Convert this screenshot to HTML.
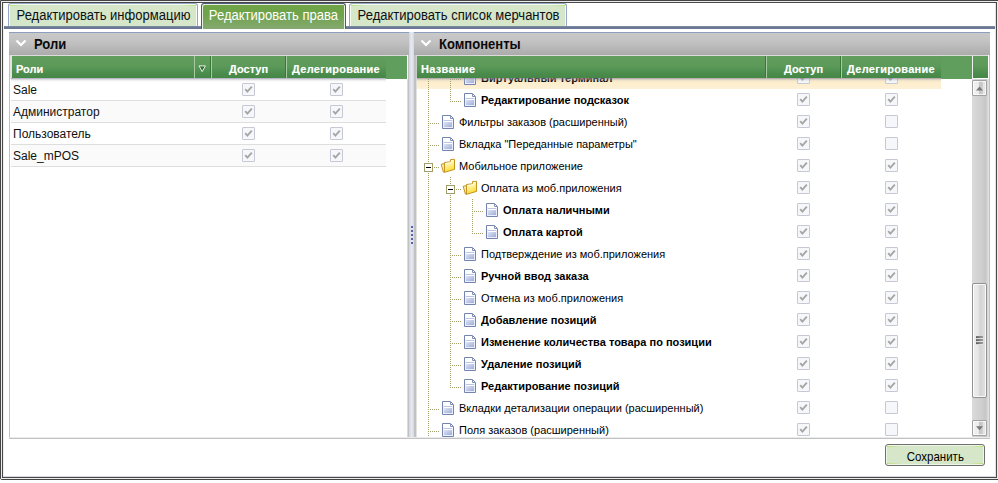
<!DOCTYPE html>
<html lang="ru">
<head>
<meta charset="utf-8">
<title>Редактировать права</title>
<style>
*{box-sizing:border-box;margin:0;padding:0}
html,body{width:998px;height:483px;overflow:hidden;background:#fff}
body{position:relative;font-family:"Liberation Sans",sans-serif;font-size:12px;color:#000}
div,svg{position:absolute}
/* outer frame */
#f1{left:0;top:0;width:999px;height:480px;border:1px solid #444;border-radius:0 0 0 2px}
#f2{left:1px;top:1px;width:997px;height:478px;border:1px solid #ececec}
#f3{left:2px;top:2px;width:995px;height:476px;border:1px solid #484848;box-shadow:inset -1px 0 0 #dfe3ea, inset 0 -1px 0 #d6dae0, inset 1px 0 0 #eceef2}
/* tabs */
#tabline{left:3px;top:26px;width:993px;height:3px;background:#6b7893;border-top:1px solid #7b88a2}
.tab{top:3px;height:23px;border:1px solid #93a6c6;border-bottom:none;border-radius:3px 3px 0 0;background:#d6e6c9;box-shadow:inset 1px 1px 0 #f4faee, inset -1px 0 0 #f4faee;font-size:14px;line-height:22px;text-align:center;color:#0a1018;white-space:nowrap}
.tab::before{content:"";position:absolute;left:1px;right:1px;top:1px;height:1px;background:linear-gradient(90deg,#bde07a,rgba(200,226,150,0) 16px,rgba(200,226,150,0) calc(100% - 16px),#bde07a)}
.tab.act::before{display:none}
.tab span{display:inline-block;transform:scaleX(.93);transform-origin:50% 50%}
.tab.act{top:3px;height:26px;border:1px solid #4c5b79;border-bottom:none;background:linear-gradient(#6ea445,#70a34d 45%,#86a972);box-shadow:inset 1px 1px 0 #e8f0e0, inset -1px 0 0 #e8f0e0;color:#fff;line-height:22px}
/* panels */
.ph{top:32px;height:23px;border-top:1px solid #8d9fbf;background:linear-gradient(#c9c9c9,#c2c2c2 40%,#ababab);}
.ph b{position:absolute;top:3px;font-size:14px;line-height:16px;font-weight:bold;color:#0a0a0a;white-space:nowrap;transform:scaleX(.93);transform-origin:0 50%}
.gh{top:55px;height:23px;border-top:1px solid #dcdcdc;background:linear-gradient(#629f5f,#5c9a59 45%,#4b8c4c 80%,#458746);}
.gh span{position:absolute;top:7px;font-size:11px;line-height:13px;font-weight:bold;color:#fff;white-space:nowrap;text-shadow:0 0 1px rgba(255,255,255,.35)}
.fill{top:56px;height:23px;background:#5f9e5d}
.sep{top:56px;height:22px;width:2px;border-left:1px solid #37773a;border-right:1px solid #a9cba4}
.sepl{top:56px;height:22px;width:1px;background:#a9cba4}
.shadow{top:78px;height:4px;background:linear-gradient(rgba(130,130,150,.7),rgba(190,190,205,.3) 50%,rgba(255,255,255,0))}
.vb{background:#c1c1c1}
/* left rows */
.lr{left:11px;width:375px;height:22px;border-bottom:1px solid #dedede;background:#fff}
.lr.alt{background:#fafafa}
.lr span{position:absolute;left:2px;top:4px;font-size:12px;line-height:14px;color:#111;white-space:nowrap}
/* checkbox */
.cb{width:13px;height:13px;border:1px solid #c6c9d4;background:#f6f7fa;border-radius:1px}
.cb svg{left:0;top:0}
/* tree */
.vl{width:1px;background-image:linear-gradient(#a3a16a 50%,rgba(255,255,255,0) 50%);background-size:1px 2px}
.hl{height:1px;background-image:linear-gradient(90deg,#a3a16a 50%,rgba(255,255,255,0) 50%);background-size:2px 1px}
.bx{width:9px;height:9px;border:1px solid #a19e6c;background:#fff}
.bx i{position:absolute;left:1px;top:3px;width:5px;height:1px;background:#000}
.tt{font-size:11px;line-height:14px;white-space:nowrap;color:#000}
.tt.b{font-weight:bold}
#treeclip{left:416px;top:78px;width:556px;height:359px;overflow:hidden}
#treein{left:-416px;top:-78px;width:998px;height:483px}
#sel{left:416px;top:78px;width:525px;height:11px;background:linear-gradient(#fdebc6,#fdefcf 60%,#fdf1d6)}
/* scrollbar */
#sbt{left:972px;top:79px;width:17px;height:359px;background:linear-gradient(90deg,#dadada,#cecece 60%,#c6c6c6 80%,#e4e4e4)}
.sbb{left:972px;width:15px;height:16px;border:1px solid #a2a2a2;border-radius:1px;background:linear-gradient(90deg,#f2f2f2,#ececec 42%,#c6c6c6 48%,#cbcbcb 72%,#e6e6e6 78%,#e2e2e2);box-shadow:inset 0 0 0 1px rgba(255,255,255,.7)}
#thumb{left:972px;top:283px;width:15px;height:115px;border:1px solid #929292;border-radius:2px;background:linear-gradient(90deg,#eeeeee,#e6e6e6 40%,#d4d4d4 55%,#e2e2e2);box-shadow:inset 0 0 0 1px rgba(255,255,255,.8)}
.grip{left:976px;width:7px;height:3px;margin-top:-1px;background:linear-gradient(90deg,#5a5a5a,#a6a6a6);border-top:1px solid rgba(140,140,140,.55);border-bottom:1px solid rgba(255,255,255,.75)}
/* button */
#btn{left:885px;top:444px;width:100px;height:22px;border:1px solid #6f6f6f;border-radius:3px;background:#d6e6c9;box-shadow:inset 0 0 0 1px #eef6e6;font-size:13px;line-height:23px;text-align:center;color:#000;white-space:nowrap}
#btn::before,#btn::after{content:"";position:absolute;left:1px;right:1px;height:1px;background:linear-gradient(90deg,#bde07a,rgba(200,226,150,0) 14px,rgba(200,226,150,0) calc(100% - 14px),#bde07a)}
#btn::before{top:1px}#btn::after{bottom:1px}
#btn span{display:inline-block;transform:scaleX(.885)}
</style>
</head>
<body>
<svg width="0" height="0" style="left:0;top:0">
<defs>
<linearGradient id="dg" x1="0" y1="0" x2="1" y2="1"><stop offset="0" stop-color="#dfe4f4"/><stop offset="1" stop-color="#9fadd6"/></linearGradient>
<linearGradient id="fg" x1="0" y1="0" x2="0.3" y2="1"><stop offset="0" stop-color="#fffbe2"/><stop offset="0.45" stop-color="#fff3a0"/><stop offset="1" stop-color="#ffdc30"/></linearGradient>
<linearGradient id="fg2" x1="0" y1="0" x2="0" y2="1"><stop offset="0" stop-color="#f6d45a"/><stop offset="1" stop-color="#e8b830"/></linearGradient>
</defs>
</svg>

<!-- tabs -->
<div id="tabline"></div>
<div class="tab" style="left:8px;width:190px"><span>Редактировать информацию</span></div>
<div class="tab act" style="left:201px;width:145px"><span>Редактировать права</span></div>
<div class="tab" style="left:349px;width:218px"><span>Редактировать список мерчантов</span></div>

<!-- left panel -->
<div class="ph" style="left:9px;width:400px">
  <svg style="left:6px;top:6px" width="12" height="9" viewBox="0 0 12 9"><path d="M1.5 1.5 L6 6 L10.5 1.5" fill="none" stroke="#fff" stroke-width="2.2"/></svg>
  <b style="left:25px">Роли</b>
</div>
<div class="vb" style="left:9px;top:55px;width:1px;height:384px"></div><div style="left:10px;top:55px;width:2px;height:24px;background:#e2e2e2"></div>
<div class="vb" style="left:408px;top:55px;width:2px;height:384px"></div>
<div class="gh" style="left:12px;width:374px">
  <span style="left:4px">Роли</span>
  <span style="left:217px">Доступ</span>
  <span style="left:280px;letter-spacing:0.3px">Делегирование</span>
</div>
<div class="fill" style="left:386px;width:21px"></div><div style="left:386px;top:55px;width:21px;height:1px;background:#d4dcd4"></div>
<div class="sepl" style="left:194px"></div>
<div class="sep" style="left:210px"></div>
<div class="sep" style="left:285px"></div>
<svg style="left:198px;top:65px" width="9" height="8" viewBox="0 0 9 8"><path d="M1.0 0.9 H7.4 L4.2 6.6 Z" fill="#2f6e33" stroke="#e8f0e6" stroke-width="1"/></svg>
<div class="lr" style="top:79px"><span>Sale</span></div>
<div class="cb" style="left:242px;top:83px"><svg width="11" height="11" viewBox="0 0 11 11"><path d="M2.2 5.2 L4.4 7.6 L8.8 2.6" fill="none" stroke="#a6a6a6" stroke-width="1.9"/></svg></div>
<div class="cb" style="left:330px;top:83px"><svg width="11" height="11" viewBox="0 0 11 11"><path d="M2.2 5.2 L4.4 7.6 L8.8 2.6" fill="none" stroke="#a6a6a6" stroke-width="1.9"/></svg></div>
<div class="lr alt" style="top:101px"><span>Администратор</span></div>
<div class="cb" style="left:242px;top:105px"><svg width="11" height="11" viewBox="0 0 11 11"><path d="M2.2 5.2 L4.4 7.6 L8.8 2.6" fill="none" stroke="#a6a6a6" stroke-width="1.9"/></svg></div>
<div class="cb" style="left:330px;top:105px"><svg width="11" height="11" viewBox="0 0 11 11"><path d="M2.2 5.2 L4.4 7.6 L8.8 2.6" fill="none" stroke="#a6a6a6" stroke-width="1.9"/></svg></div>
<div class="lr" style="top:123px"><span>Пользователь</span></div>
<div class="cb" style="left:242px;top:127px"><svg width="11" height="11" viewBox="0 0 11 11"><path d="M2.2 5.2 L4.4 7.6 L8.8 2.6" fill="none" stroke="#a6a6a6" stroke-width="1.9"/></svg></div>
<div class="cb" style="left:330px;top:127px"><svg width="11" height="11" viewBox="0 0 11 11"><path d="M2.2 5.2 L4.4 7.6 L8.8 2.6" fill="none" stroke="#a6a6a6" stroke-width="1.9"/></svg></div>
<div class="lr alt" style="top:145px"><span>Sale_mPOS</span></div>
<div class="cb" style="left:242px;top:149px"><svg width="11" height="11" viewBox="0 0 11 11"><path d="M2.2 5.2 L4.4 7.6 L8.8 2.6" fill="none" stroke="#a6a6a6" stroke-width="1.9"/></svg></div>
<div class="cb" style="left:330px;top:149px"><svg width="11" height="11" viewBox="0 0 11 11"><path d="M2.2 5.2 L4.4 7.6 L8.8 2.6" fill="none" stroke="#a6a6a6" stroke-width="1.9"/></svg></div>
<div class="shadow" style="left:11px;width:375px"></div>

<!-- splitter -->
<div style="left:409px;top:32px;width:5px;height:406px;background:linear-gradient(90deg,#d0d5e0,#e4e9f3 50%,#d4d9e5)"></div>
<div style="left:411px;top:226px;width:2px;height:2px;background:#5565a4;box-shadow:0 4px 0 #5565a4,0 8px 0 #5565a4,0 12px 0 #5565a4,0 16px 0 #5565a4"></div>

<!-- right panel -->
<div class="ph" style="left:414px;width:576px">
  <svg style="left:6px;top:6px" width="12" height="9" viewBox="0 0 12 9"><path d="M1.5 1.5 L6 6 L10.5 1.5" fill="none" stroke="#fff" stroke-width="2.2"/></svg>
  <b style="left:25px">Компоненты</b>
</div>
<div class="vb" style="left:414px;top:55px;width:2px;height:384px"></div>
<div class="vb" style="left:989px;top:55px;width:1px;height:384px"></div>
<div id="sel"></div>
<div id="treeclip"><div id="treein">
<div class="vl" style="left:428px;top:67px;height:22px"></div>
<div class="vl" style="left:450px;top:67px;height:22px"></div>
<div class="hl" style="left:452px;top:79px;width:10px"></div>
<svg class="ic" style="left:464px;top:71px" width="12" height="14" viewBox="0 0 12 14"><path d="M0.5 0.5 H8.5 L11.5 3.5 V13.5 H0.5 Z" fill="#fff" stroke="#7484ac" stroke-width="1" stroke-linejoin="miter"/><path d="M1.5 4 V12.5 H10.5 V5" fill="none" stroke="#eaefff" stroke-width="1"/><path d="M8.5 1 V3.5 H11" fill="none" stroke="#8090b6" stroke-width="1"/><rect x="2" y="5" width="8" height="1" fill="#bcc5e4" shape-rendering="crispEdges"/><rect x="2" y="7" width="8" height="5" fill="url(#dg)" shape-rendering="crispEdges"/></svg>
<div class="tt b" style="left:481px;top:71px">Виртуальный терминал</div>
<div class="cb" style="left:797px;top:71px"><svg width="11" height="11" viewBox="0 0 11 11"><path d="M2.2 5.2 L4.4 7.6 L8.8 2.6" fill="none" stroke="#a6a6a6" stroke-width="1.9"/></svg></div>
<div class="cb" style="left:885px;top:71px"><svg width="11" height="11" viewBox="0 0 11 11"><path d="M2.2 5.2 L4.4 7.6 L8.8 2.6" fill="none" stroke="#a6a6a6" stroke-width="1.9"/></svg></div>
<div class="vl" style="left:428px;top:89px;height:22px"></div>
<div class="vl" style="left:450px;top:89px;height:13px"></div>
<div class="hl" style="left:452px;top:101px;width:10px"></div>
<svg class="ic" style="left:464px;top:93px" width="12" height="14" viewBox="0 0 12 14"><path d="M0.5 0.5 H8.5 L11.5 3.5 V13.5 H0.5 Z" fill="#fff" stroke="#7484ac" stroke-width="1" stroke-linejoin="miter"/><path d="M1.5 4 V12.5 H10.5 V5" fill="none" stroke="#eaefff" stroke-width="1"/><path d="M8.5 1 V3.5 H11" fill="none" stroke="#8090b6" stroke-width="1"/><rect x="2" y="5" width="8" height="1" fill="#bcc5e4" shape-rendering="crispEdges"/><rect x="2" y="7" width="8" height="5" fill="url(#dg)" shape-rendering="crispEdges"/></svg>
<div class="tt b" style="left:481px;top:93px">Редактирование подсказок</div>
<div class="cb" style="left:797px;top:93px"><svg width="11" height="11" viewBox="0 0 11 11"><path d="M2.2 5.2 L4.4 7.6 L8.8 2.6" fill="none" stroke="#a6a6a6" stroke-width="1.9"/></svg></div>
<div class="cb" style="left:885px;top:93px"><svg width="11" height="11" viewBox="0 0 11 11"><path d="M2.2 5.2 L4.4 7.6 L8.8 2.6" fill="none" stroke="#a6a6a6" stroke-width="1.9"/></svg></div>
<div class="vl" style="left:428px;top:111px;height:22px"></div>
<div class="hl" style="left:430px;top:123px;width:10px"></div>
<svg class="ic" style="left:442px;top:115px" width="12" height="14" viewBox="0 0 12 14"><path d="M0.5 0.5 H8.5 L11.5 3.5 V13.5 H0.5 Z" fill="#fff" stroke="#7484ac" stroke-width="1" stroke-linejoin="miter"/><path d="M1.5 4 V12.5 H10.5 V5" fill="none" stroke="#eaefff" stroke-width="1"/><path d="M8.5 1 V3.5 H11" fill="none" stroke="#8090b6" stroke-width="1"/><rect x="2" y="5" width="8" height="1" fill="#bcc5e4" shape-rendering="crispEdges"/><rect x="2" y="7" width="8" height="5" fill="url(#dg)" shape-rendering="crispEdges"/></svg>
<div class="tt" style="left:459px;top:115px">Фильтры заказов (расширенный)</div>
<div class="cb" style="left:797px;top:115px"><svg width="11" height="11" viewBox="0 0 11 11"><path d="M2.2 5.2 L4.4 7.6 L8.8 2.6" fill="none" stroke="#a6a6a6" stroke-width="1.9"/></svg></div>
<div class="cb" style="left:885px;top:115px"></div>
<div class="vl" style="left:428px;top:133px;height:22px"></div>
<div class="hl" style="left:430px;top:145px;width:10px"></div>
<svg class="ic" style="left:442px;top:137px" width="12" height="14" viewBox="0 0 12 14"><path d="M0.5 0.5 H8.5 L11.5 3.5 V13.5 H0.5 Z" fill="#fff" stroke="#7484ac" stroke-width="1" stroke-linejoin="miter"/><path d="M1.5 4 V12.5 H10.5 V5" fill="none" stroke="#eaefff" stroke-width="1"/><path d="M8.5 1 V3.5 H11" fill="none" stroke="#8090b6" stroke-width="1"/><rect x="2" y="5" width="8" height="1" fill="#bcc5e4" shape-rendering="crispEdges"/><rect x="2" y="7" width="8" height="5" fill="url(#dg)" shape-rendering="crispEdges"/></svg>
<div class="tt" style="left:459px;top:137px">Вкладка "Переданные параметры"</div>
<div class="cb" style="left:797px;top:137px"><svg width="11" height="11" viewBox="0 0 11 11"><path d="M2.2 5.2 L4.4 7.6 L8.8 2.6" fill="none" stroke="#a6a6a6" stroke-width="1.9"/></svg></div>
<div class="cb" style="left:885px;top:137px"></div>
<div class="vl" style="left:428px;top:155px;height:22px"></div>
<div class="hl" style="left:434px;top:167px;width:6px"></div>
<div class="bx" style="left:424px;top:163px"><i></i></div>
<svg class="ic" style="left:440px;top:158px" width="16" height="16" viewBox="0 0 16 16"><path d="M4.5 4.5 L10.5 3.8 L10.5 1.6 L14.5 1.3 L14.5 11.4 L4.5 14.3 Z" fill="url(#fg)" stroke="#c4921f" stroke-width="1" stroke-linejoin="round"/><path d="M5.5 5.5 L11.4 4.7 L11.4 2.5 L13.5 2.3" fill="none" stroke="#fffdf0" stroke-width="1"/><path d="M1.2 6.3 L4.4 5.6 L4.4 14.3 L3.4 14.0 Z" fill="#fff4b4" stroke="#c4921f" stroke-width="1" stroke-linejoin="round"/></svg>
<div class="tt" style="left:459px;top:159px">Мобильное приложение</div>
<div class="cb" style="left:797px;top:159px"><svg width="11" height="11" viewBox="0 0 11 11"><path d="M2.2 5.2 L4.4 7.6 L8.8 2.6" fill="none" stroke="#a6a6a6" stroke-width="1.9"/></svg></div>
<div class="cb" style="left:885px;top:159px"><svg width="11" height="11" viewBox="0 0 11 11"><path d="M2.2 5.2 L4.4 7.6 L8.8 2.6" fill="none" stroke="#a6a6a6" stroke-width="1.9"/></svg></div>
<div class="vl" style="left:428px;top:177px;height:22px"></div>
<div class="vl" style="left:450px;top:177px;height:22px"></div>
<div class="hl" style="left:456px;top:189px;width:6px"></div>
<div class="bx" style="left:446px;top:185px"><i></i></div>
<svg class="ic" style="left:462px;top:180px" width="16" height="16" viewBox="0 0 16 16"><path d="M4.5 4.5 L10.5 3.8 L10.5 1.6 L14.5 1.3 L14.5 11.4 L4.5 14.3 Z" fill="url(#fg)" stroke="#c4921f" stroke-width="1" stroke-linejoin="round"/><path d="M5.5 5.5 L11.4 4.7 L11.4 2.5 L13.5 2.3" fill="none" stroke="#fffdf0" stroke-width="1"/><path d="M1.2 6.3 L4.4 5.6 L4.4 14.3 L3.4 14.0 Z" fill="#fff4b4" stroke="#c4921f" stroke-width="1" stroke-linejoin="round"/></svg>
<div class="tt" style="left:481px;top:181px">Оплата из моб.приложения</div>
<div class="cb" style="left:797px;top:181px"><svg width="11" height="11" viewBox="0 0 11 11"><path d="M2.2 5.2 L4.4 7.6 L8.8 2.6" fill="none" stroke="#a6a6a6" stroke-width="1.9"/></svg></div>
<div class="cb" style="left:885px;top:181px"><svg width="11" height="11" viewBox="0 0 11 11"><path d="M2.2 5.2 L4.4 7.6 L8.8 2.6" fill="none" stroke="#a6a6a6" stroke-width="1.9"/></svg></div>
<div class="vl" style="left:428px;top:199px;height:22px"></div>
<div class="vl" style="left:450px;top:199px;height:22px"></div>
<div class="vl" style="left:472px;top:199px;height:22px"></div>
<div class="hl" style="left:474px;top:211px;width:10px"></div>
<svg class="ic" style="left:486px;top:203px" width="12" height="14" viewBox="0 0 12 14"><path d="M0.5 0.5 H8.5 L11.5 3.5 V13.5 H0.5 Z" fill="#fff" stroke="#7484ac" stroke-width="1" stroke-linejoin="miter"/><path d="M1.5 4 V12.5 H10.5 V5" fill="none" stroke="#eaefff" stroke-width="1"/><path d="M8.5 1 V3.5 H11" fill="none" stroke="#8090b6" stroke-width="1"/><rect x="2" y="5" width="8" height="1" fill="#bcc5e4" shape-rendering="crispEdges"/><rect x="2" y="7" width="8" height="5" fill="url(#dg)" shape-rendering="crispEdges"/></svg>
<div class="tt b" style="left:503px;top:203px">Оплата наличными</div>
<div class="cb" style="left:797px;top:203px"><svg width="11" height="11" viewBox="0 0 11 11"><path d="M2.2 5.2 L4.4 7.6 L8.8 2.6" fill="none" stroke="#a6a6a6" stroke-width="1.9"/></svg></div>
<div class="cb" style="left:885px;top:203px"><svg width="11" height="11" viewBox="0 0 11 11"><path d="M2.2 5.2 L4.4 7.6 L8.8 2.6" fill="none" stroke="#a6a6a6" stroke-width="1.9"/></svg></div>
<div class="vl" style="left:428px;top:221px;height:22px"></div>
<div class="vl" style="left:450px;top:221px;height:22px"></div>
<div class="vl" style="left:472px;top:221px;height:13px"></div>
<div class="hl" style="left:474px;top:233px;width:10px"></div>
<svg class="ic" style="left:486px;top:225px" width="12" height="14" viewBox="0 0 12 14"><path d="M0.5 0.5 H8.5 L11.5 3.5 V13.5 H0.5 Z" fill="#fff" stroke="#7484ac" stroke-width="1" stroke-linejoin="miter"/><path d="M1.5 4 V12.5 H10.5 V5" fill="none" stroke="#eaefff" stroke-width="1"/><path d="M8.5 1 V3.5 H11" fill="none" stroke="#8090b6" stroke-width="1"/><rect x="2" y="5" width="8" height="1" fill="#bcc5e4" shape-rendering="crispEdges"/><rect x="2" y="7" width="8" height="5" fill="url(#dg)" shape-rendering="crispEdges"/></svg>
<div class="tt b" style="left:503px;top:225px">Оплата картой</div>
<div class="cb" style="left:797px;top:225px"><svg width="11" height="11" viewBox="0 0 11 11"><path d="M2.2 5.2 L4.4 7.6 L8.8 2.6" fill="none" stroke="#a6a6a6" stroke-width="1.9"/></svg></div>
<div class="cb" style="left:885px;top:225px"><svg width="11" height="11" viewBox="0 0 11 11"><path d="M2.2 5.2 L4.4 7.6 L8.8 2.6" fill="none" stroke="#a6a6a6" stroke-width="1.9"/></svg></div>
<div class="vl" style="left:428px;top:243px;height:22px"></div>
<div class="vl" style="left:450px;top:243px;height:22px"></div>
<div class="hl" style="left:452px;top:255px;width:10px"></div>
<svg class="ic" style="left:464px;top:247px" width="12" height="14" viewBox="0 0 12 14"><path d="M0.5 0.5 H8.5 L11.5 3.5 V13.5 H0.5 Z" fill="#fff" stroke="#7484ac" stroke-width="1" stroke-linejoin="miter"/><path d="M1.5 4 V12.5 H10.5 V5" fill="none" stroke="#eaefff" stroke-width="1"/><path d="M8.5 1 V3.5 H11" fill="none" stroke="#8090b6" stroke-width="1"/><rect x="2" y="5" width="8" height="1" fill="#bcc5e4" shape-rendering="crispEdges"/><rect x="2" y="7" width="8" height="5" fill="url(#dg)" shape-rendering="crispEdges"/></svg>
<div class="tt" style="left:481px;top:247px">Подтверждение из моб.приложения</div>
<div class="cb" style="left:797px;top:247px"><svg width="11" height="11" viewBox="0 0 11 11"><path d="M2.2 5.2 L4.4 7.6 L8.8 2.6" fill="none" stroke="#a6a6a6" stroke-width="1.9"/></svg></div>
<div class="cb" style="left:885px;top:247px"><svg width="11" height="11" viewBox="0 0 11 11"><path d="M2.2 5.2 L4.4 7.6 L8.8 2.6" fill="none" stroke="#a6a6a6" stroke-width="1.9"/></svg></div>
<div class="vl" style="left:428px;top:265px;height:22px"></div>
<div class="vl" style="left:450px;top:265px;height:22px"></div>
<div class="hl" style="left:452px;top:277px;width:10px"></div>
<svg class="ic" style="left:464px;top:269px" width="12" height="14" viewBox="0 0 12 14"><path d="M0.5 0.5 H8.5 L11.5 3.5 V13.5 H0.5 Z" fill="#fff" stroke="#7484ac" stroke-width="1" stroke-linejoin="miter"/><path d="M1.5 4 V12.5 H10.5 V5" fill="none" stroke="#eaefff" stroke-width="1"/><path d="M8.5 1 V3.5 H11" fill="none" stroke="#8090b6" stroke-width="1"/><rect x="2" y="5" width="8" height="1" fill="#bcc5e4" shape-rendering="crispEdges"/><rect x="2" y="7" width="8" height="5" fill="url(#dg)" shape-rendering="crispEdges"/></svg>
<div class="tt b" style="left:481px;top:269px">Ручной ввод заказа</div>
<div class="cb" style="left:797px;top:269px"><svg width="11" height="11" viewBox="0 0 11 11"><path d="M2.2 5.2 L4.4 7.6 L8.8 2.6" fill="none" stroke="#a6a6a6" stroke-width="1.9"/></svg></div>
<div class="cb" style="left:885px;top:269px"><svg width="11" height="11" viewBox="0 0 11 11"><path d="M2.2 5.2 L4.4 7.6 L8.8 2.6" fill="none" stroke="#a6a6a6" stroke-width="1.9"/></svg></div>
<div class="vl" style="left:428px;top:287px;height:22px"></div>
<div class="vl" style="left:450px;top:287px;height:22px"></div>
<div class="hl" style="left:452px;top:299px;width:10px"></div>
<svg class="ic" style="left:464px;top:291px" width="12" height="14" viewBox="0 0 12 14"><path d="M0.5 0.5 H8.5 L11.5 3.5 V13.5 H0.5 Z" fill="#fff" stroke="#7484ac" stroke-width="1" stroke-linejoin="miter"/><path d="M1.5 4 V12.5 H10.5 V5" fill="none" stroke="#eaefff" stroke-width="1"/><path d="M8.5 1 V3.5 H11" fill="none" stroke="#8090b6" stroke-width="1"/><rect x="2" y="5" width="8" height="1" fill="#bcc5e4" shape-rendering="crispEdges"/><rect x="2" y="7" width="8" height="5" fill="url(#dg)" shape-rendering="crispEdges"/></svg>
<div class="tt" style="left:481px;top:291px">Отмена из моб.приложения</div>
<div class="cb" style="left:797px;top:291px"><svg width="11" height="11" viewBox="0 0 11 11"><path d="M2.2 5.2 L4.4 7.6 L8.8 2.6" fill="none" stroke="#a6a6a6" stroke-width="1.9"/></svg></div>
<div class="cb" style="left:885px;top:291px"><svg width="11" height="11" viewBox="0 0 11 11"><path d="M2.2 5.2 L4.4 7.6 L8.8 2.6" fill="none" stroke="#a6a6a6" stroke-width="1.9"/></svg></div>
<div class="vl" style="left:428px;top:309px;height:22px"></div>
<div class="vl" style="left:450px;top:309px;height:22px"></div>
<div class="hl" style="left:452px;top:321px;width:10px"></div>
<svg class="ic" style="left:464px;top:313px" width="12" height="14" viewBox="0 0 12 14"><path d="M0.5 0.5 H8.5 L11.5 3.5 V13.5 H0.5 Z" fill="#fff" stroke="#7484ac" stroke-width="1" stroke-linejoin="miter"/><path d="M1.5 4 V12.5 H10.5 V5" fill="none" stroke="#eaefff" stroke-width="1"/><path d="M8.5 1 V3.5 H11" fill="none" stroke="#8090b6" stroke-width="1"/><rect x="2" y="5" width="8" height="1" fill="#bcc5e4" shape-rendering="crispEdges"/><rect x="2" y="7" width="8" height="5" fill="url(#dg)" shape-rendering="crispEdges"/></svg>
<div class="tt b" style="left:481px;top:313px">Добавление позиций</div>
<div class="cb" style="left:797px;top:313px"><svg width="11" height="11" viewBox="0 0 11 11"><path d="M2.2 5.2 L4.4 7.6 L8.8 2.6" fill="none" stroke="#a6a6a6" stroke-width="1.9"/></svg></div>
<div class="cb" style="left:885px;top:313px"><svg width="11" height="11" viewBox="0 0 11 11"><path d="M2.2 5.2 L4.4 7.6 L8.8 2.6" fill="none" stroke="#a6a6a6" stroke-width="1.9"/></svg></div>
<div class="vl" style="left:428px;top:331px;height:22px"></div>
<div class="vl" style="left:450px;top:331px;height:22px"></div>
<div class="hl" style="left:452px;top:343px;width:10px"></div>
<svg class="ic" style="left:464px;top:335px" width="12" height="14" viewBox="0 0 12 14"><path d="M0.5 0.5 H8.5 L11.5 3.5 V13.5 H0.5 Z" fill="#fff" stroke="#7484ac" stroke-width="1" stroke-linejoin="miter"/><path d="M1.5 4 V12.5 H10.5 V5" fill="none" stroke="#eaefff" stroke-width="1"/><path d="M8.5 1 V3.5 H11" fill="none" stroke="#8090b6" stroke-width="1"/><rect x="2" y="5" width="8" height="1" fill="#bcc5e4" shape-rendering="crispEdges"/><rect x="2" y="7" width="8" height="5" fill="url(#dg)" shape-rendering="crispEdges"/></svg>
<div class="tt b" style="left:481px;top:335px">Изменение количества товара по позиции</div>
<div class="cb" style="left:797px;top:335px"><svg width="11" height="11" viewBox="0 0 11 11"><path d="M2.2 5.2 L4.4 7.6 L8.8 2.6" fill="none" stroke="#a6a6a6" stroke-width="1.9"/></svg></div>
<div class="cb" style="left:885px;top:335px"><svg width="11" height="11" viewBox="0 0 11 11"><path d="M2.2 5.2 L4.4 7.6 L8.8 2.6" fill="none" stroke="#a6a6a6" stroke-width="1.9"/></svg></div>
<div class="vl" style="left:428px;top:353px;height:22px"></div>
<div class="vl" style="left:450px;top:353px;height:22px"></div>
<div class="hl" style="left:452px;top:365px;width:10px"></div>
<svg class="ic" style="left:464px;top:357px" width="12" height="14" viewBox="0 0 12 14"><path d="M0.5 0.5 H8.5 L11.5 3.5 V13.5 H0.5 Z" fill="#fff" stroke="#7484ac" stroke-width="1" stroke-linejoin="miter"/><path d="M1.5 4 V12.5 H10.5 V5" fill="none" stroke="#eaefff" stroke-width="1"/><path d="M8.5 1 V3.5 H11" fill="none" stroke="#8090b6" stroke-width="1"/><rect x="2" y="5" width="8" height="1" fill="#bcc5e4" shape-rendering="crispEdges"/><rect x="2" y="7" width="8" height="5" fill="url(#dg)" shape-rendering="crispEdges"/></svg>
<div class="tt b" style="left:481px;top:357px">Удаление позиций</div>
<div class="cb" style="left:797px;top:357px"><svg width="11" height="11" viewBox="0 0 11 11"><path d="M2.2 5.2 L4.4 7.6 L8.8 2.6" fill="none" stroke="#a6a6a6" stroke-width="1.9"/></svg></div>
<div class="cb" style="left:885px;top:357px"><svg width="11" height="11" viewBox="0 0 11 11"><path d="M2.2 5.2 L4.4 7.6 L8.8 2.6" fill="none" stroke="#a6a6a6" stroke-width="1.9"/></svg></div>
<div class="vl" style="left:428px;top:375px;height:22px"></div>
<div class="vl" style="left:450px;top:375px;height:13px"></div>
<div class="hl" style="left:452px;top:387px;width:10px"></div>
<svg class="ic" style="left:464px;top:379px" width="12" height="14" viewBox="0 0 12 14"><path d="M0.5 0.5 H8.5 L11.5 3.5 V13.5 H0.5 Z" fill="#fff" stroke="#7484ac" stroke-width="1" stroke-linejoin="miter"/><path d="M1.5 4 V12.5 H10.5 V5" fill="none" stroke="#eaefff" stroke-width="1"/><path d="M8.5 1 V3.5 H11" fill="none" stroke="#8090b6" stroke-width="1"/><rect x="2" y="5" width="8" height="1" fill="#bcc5e4" shape-rendering="crispEdges"/><rect x="2" y="7" width="8" height="5" fill="url(#dg)" shape-rendering="crispEdges"/></svg>
<div class="tt b" style="left:481px;top:379px">Редактирование позиций</div>
<div class="cb" style="left:797px;top:379px"><svg width="11" height="11" viewBox="0 0 11 11"><path d="M2.2 5.2 L4.4 7.6 L8.8 2.6" fill="none" stroke="#a6a6a6" stroke-width="1.9"/></svg></div>
<div class="cb" style="left:885px;top:379px"><svg width="11" height="11" viewBox="0 0 11 11"><path d="M2.2 5.2 L4.4 7.6 L8.8 2.6" fill="none" stroke="#a6a6a6" stroke-width="1.9"/></svg></div>
<div class="vl" style="left:428px;top:397px;height:22px"></div>
<div class="hl" style="left:430px;top:409px;width:10px"></div>
<svg class="ic" style="left:442px;top:401px" width="12" height="14" viewBox="0 0 12 14"><path d="M0.5 0.5 H8.5 L11.5 3.5 V13.5 H0.5 Z" fill="#fff" stroke="#7484ac" stroke-width="1" stroke-linejoin="miter"/><path d="M1.5 4 V12.5 H10.5 V5" fill="none" stroke="#eaefff" stroke-width="1"/><path d="M8.5 1 V3.5 H11" fill="none" stroke="#8090b6" stroke-width="1"/><rect x="2" y="5" width="8" height="1" fill="#bcc5e4" shape-rendering="crispEdges"/><rect x="2" y="7" width="8" height="5" fill="url(#dg)" shape-rendering="crispEdges"/></svg>
<div class="tt" style="left:459px;top:401px">Вкладки детализации операции (расширенный)</div>
<div class="cb" style="left:797px;top:401px"><svg width="11" height="11" viewBox="0 0 11 11"><path d="M2.2 5.2 L4.4 7.6 L8.8 2.6" fill="none" stroke="#a6a6a6" stroke-width="1.9"/></svg></div>
<div class="cb" style="left:885px;top:401px"></div>
<div class="vl" style="left:428px;top:419px;height:22px"></div>
<div class="hl" style="left:430px;top:431px;width:10px"></div>
<svg class="ic" style="left:442px;top:423px" width="12" height="14" viewBox="0 0 12 14"><path d="M0.5 0.5 H8.5 L11.5 3.5 V13.5 H0.5 Z" fill="#fff" stroke="#7484ac" stroke-width="1" stroke-linejoin="miter"/><path d="M1.5 4 V12.5 H10.5 V5" fill="none" stroke="#eaefff" stroke-width="1"/><path d="M8.5 1 V3.5 H11" fill="none" stroke="#8090b6" stroke-width="1"/><rect x="2" y="5" width="8" height="1" fill="#bcc5e4" shape-rendering="crispEdges"/><rect x="2" y="7" width="8" height="5" fill="url(#dg)" shape-rendering="crispEdges"/></svg>
<div class="tt" style="left:459px;top:423px">Поля заказов (расширенный)</div>
<div class="cb" style="left:797px;top:423px"><svg width="11" height="11" viewBox="0 0 11 11"><path d="M2.2 5.2 L4.4 7.6 L8.8 2.6" fill="none" stroke="#a6a6a6" stroke-width="1.9"/></svg></div>
<div class="cb" style="left:885px;top:423px"></div>
</div></div>
<div class="gh" style="left:416px;width:525px">
  <span style="left:5px;letter-spacing:0.3px">Название</span>
  <span style="left:368px">Доступ</span>
  <span style="left:431px;letter-spacing:0.3px">Делегирование</span>
</div>
<div class="fill" style="left:941px;width:31px"></div><div style="left:941px;top:55px;width:47px;height:1px;background:#d4dcd4"></div>
<div class="sep" style="left:765px"></div>
<div class="sep" style="left:840px"></div>
<div class="sepl" style="left:972px;background:#f0f0f0"></div>
<div class="gh" style="left:973px;width:15px"></div>
<div class="shadow" style="left:416px;width:525px"></div>

<div style="left:407px;top:79px;width:1px;height:358px;background:#dadada"></div>
<div style="left:416px;top:55px;width:1px;height:382px;background:#dcdcdc;opacity:.85"></div>
<!-- scrollbar -->
<div id="sbt"></div>
<div class="sbb" style="top:80px"><svg style="left:2px;top:5px" width="9" height="5" viewBox="0 0 9 5"><path d="M4.5 0.4 L8 4.4 H1 Z" fill="#787878"/></svg></div>
<div class="sbb" style="top:420px"><svg style="left:2px;top:5px" width="9" height="5" viewBox="0 0 9 5"><path d="M4.5 4.3 L8 0.3 H1 Z" fill="#787878"/></svg></div>
<div id="thumb"></div>
<div class="grip" style="top:337px"></div>
<div class="grip" style="top:340px"></div>
<div class="grip" style="top:343px"></div>

<!-- bottom border of panels -->
<div style="left:9px;top:437px;width:981px;height:1px;background:#ebebeb"></div><div style="left:9px;top:438px;width:981px;height:1px;background:#c2c2c2"></div>

<div id="btn"><span>Сохранить</span></div>

<!-- frame -->
<div id="f1"></div><div id="f2"></div><div id="f3"></div>
</body>
</html>
